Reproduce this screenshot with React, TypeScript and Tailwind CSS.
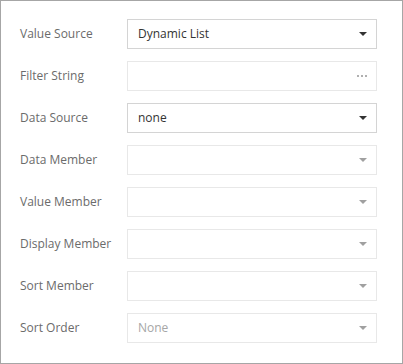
import React from 'react';

type Row = {
  label: string;
  value?: string;
  kind: 'select' | 'dots';
  enabled?: boolean;
  placeholder?: boolean;
};

const rows: Row[] = [
  { label: 'Value Source', value: 'Dynamic List', kind: 'select', enabled: true },
  { label: 'Filter String', kind: 'dots' },
  { label: 'Data Source', value: 'none', kind: 'select', enabled: true },
  { label: 'Data Member', kind: 'select' },
  { label: 'Value Member', kind: 'select' },
  { label: 'Display Member', kind: 'select' },
  { label: 'Sort Member', kind: 'select' },
  { label: 'Sort Order', value: 'None', kind: 'select', placeholder: true },
];

function Arrow({ dark }: { dark?: boolean }) {
  return (
    <svg width="8" height="4" viewBox="0 0 8 4" className="block">
      <path d="M0 0H8L4 4Z" fill={dark ? '#333333' : '#a0a0a0'} />
    </svg>
  );
}

function Dots() {
  return (
    <div className="flex gap-[2px]">
      <span className="w-[2px] h-[2px] bg-[#b0b0b0]" />
      <span className="w-[2px] h-[2px] bg-[#b0b0b0]" />
      <span className="w-[2px] h-[2px] bg-[#b0b0b0]" />
    </div>
  );
}

export default function App() {
  return (
    <div
      className="w-[403px] h-[364px] bg-white border border-[#a6a6a6] pt-[18px]"
      style={{ fontFamily: '"Open Sans", "Noto Sans", sans-serif' }}
    >
      <div className="flex flex-col gap-[12px]">
        {rows.map((r) => (
          <div key={r.label} className="flex items-center h-[30px]">
            <div className="w-[126px] pl-[19px] text-[12px] text-[#6b6b6b]">{r.label}</div>
            <div
              className={`w-[250px] h-[30px] flex items-center justify-between pl-[10px] pr-[9px] border ${
                r.enabled ? 'border-[#d4d4d4]' : 'border-[#e8e8e8]'
              }`}
            >
              <span
                className={`text-[12px] ${r.placeholder ? 'text-[#a6a6a6]' : 'text-[#333333]'}`}
              >
                {r.value ?? ''}
              </span>
              {r.kind === 'dots' ? <Dots /> : <Arrow dark={r.enabled} />}
            </div>
          </div>
        ))}
      </div>
    </div>
  );
}
